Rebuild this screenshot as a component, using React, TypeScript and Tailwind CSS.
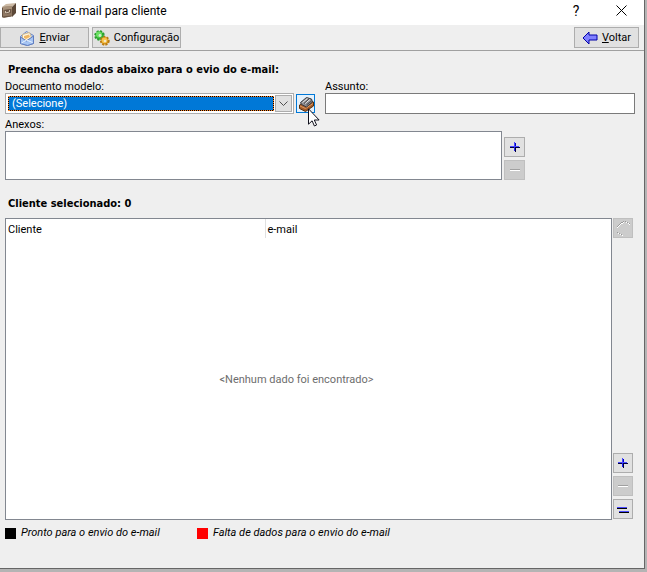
import { useState, type ReactNode } from "react";

function SideButton({ label, disabled, wide, children }: { label: string; disabled?: boolean; wide?: boolean; children: ReactNode }) {
  return (
    <button
      type="button"
      aria-label={label}
      disabled={disabled}
      className={
        (wide ? "w-[21px]" : "w-5") +
        " flex h-5 items-center justify-center border border-[#adadad] bg-[#e1e1e1] disabled:border-[#bfbfbf] disabled:bg-[#cccccc]"
      }
    >
      {children}
    </button>
  );
}

function PlusIcon() {
  return (
    <svg width="12" height="12" viewBox="0 0 12 12" shapeRendering="crispEdges">
      <path d="M6 2h1v9H6zM1 6h10v1H1z" fill="#00003c" />
      <path d="M5 1h1v9H5zM1 5h9v1H1z" fill="#4a4aff" />
      <path d="M6 2h1v3H6z" fill="#0000c8" />
      <path d="M6 5h4v1H6z" fill="#4a4aff" />
      <path d="M5 6h1v4H5z" fill="#2020f0" />
    </svg>
  );
}

function MinusIcon() {
  return (
    <svg width="12" height="12" viewBox="0 0 12 12" shapeRendering="crispEdges">
      <path d="M1 5h10v1H1z" fill="#a0a0a0" />
      <path d="M1 6h10v1H1z" fill="#fff" />
    </svg>
  );
}

function EqualsIcon() {
  return (
    <svg width="12" height="12" viewBox="0 0 12 12" shapeRendering="crispEdges">
      <path d="M0 4h10v1H0zM2 8h10v1H2z" fill="#4a4aff" />
      <path d="M0 5h10v1H0zM2 9h10v1H2z" fill="#000" />
    </svg>
  );
}

function LinkIcon() {
  return (
    <svg width="16" height="16" viewBox="0 0 16 16" shapeRendering="crispEdges">
      <path
        d="M2 6h1v1H2zM3 5h1v1H3zM4 4h1v1H4zM5 3h1v1H5zM6 2h2v1H6zM8 1h1v1H8zM10 1h1v1h-1zM12 2h1v1h-1zM14 3h1v1h-1zM2 12h1v1H2zM4 13h1v1H4zM6 14h1v1H6z"
        fill="#999"
      />
      <path
        d="M2 7h1v1H2zM3 6h1v1H3zM4 5h1v1H4zM5 4h1v1H5zM6 3h2v1H6zM8 2h1v1H8zM11 2h1v1h-1zM13 3h1v1h-1zM14 4h1v1h-1zM3 13h1v1H3zM5 14h1v1H5zM7 15h1v1H7z"
        fill="#fff"
      />
    </svg>
  );
}

function BoxIcon() {
  return (
    <svg width="16" height="17" viewBox="0 0 16 17">
      <path d="M1 5l4-3 10-1-4 4z" fill="#cdbba6" />
      <path d="M1 5l10-1 1 10-9 2-2-1z" fill="#8f7863" />
      <path d="M11 5l4-4v10l-4 4z" fill="#5c4838" />
      <path d="M1 5l10-1v3L1 8z" fill="#a8927b" />
      <path d="M3 8l7-1v4l-6 1z" fill="#6b5646" />
      <path d="M4.500 9v2l4-1V8" fill="none" stroke="#cfc0ae" />
      <path d="M1.500 6v9l9-1" fill="none" stroke="#655141" />
    </svg>
  );
}

function MailIcon() {
  return (
    <svg width="16" height="16" viewBox="0 0 16 16">
      <path d="M1.500 6.500l6-5 7 4v8l-6 2-7-2z" fill="#b9d0f4" stroke="#6b86c4" />
      <path d="M3.500 4.500l7-2 2 5-5 3-4-2z" fill="#fff7e2" stroke="#d2b98c" />
      <path d="M5 6l5-1.500 1 2.500-4 2-2-1z" fill="#efb765" />
      <path d="M1.500 7l6 4 7-5v7.500l-6 2-7-2z" fill="#a5c4f3" stroke="#5f7cbf" />
      <path d="M2.500 13l5-3 6 2.500" fill="none" stroke="#e9f3ff" />
    </svg>
  );
}

function GearsIcon() {
  return (
    <svg width="16" height="16" viewBox="0 0 16 16">
      <circle cx="5.500" cy="5.500" r="4.200" fill="#35b838" stroke="#2a9c30" strokeWidth="2.200" strokeDasharray="2 1.300" />
      <circle cx="5" cy="4.500" r="3" fill="#6be062" />
      <circle cx="6" cy="5.500" r="1.400" fill="#d5ecd2" />
      <circle cx="10.800" cy="10.800" r="3.800" fill="#e3a022" stroke="#b97a12" strokeWidth="2.200" strokeDasharray="2 1.200" />
      <circle cx="10.500" cy="10.300" r="2.800" fill="#f6c34a" />
      <circle cx="11" cy="11" r="1.300" fill="#f2e6cc" />
    </svg>
  );
}

function BackIcon() {
  return (
    <svg width="16" height="14" viewBox="0 0 16 14">
      <path d="M1 7l6-6v3h8v5H7v4z" fill="#8080ff" stroke="#0000a8" />
    </svg>
  );
}

function StapleIcon() {
  return (
    <svg width="16" height="16" viewBox="0 0 16 16">
      <path d="M1.500 9l8-5 6 2v4l-8 5.500-6-3z" fill="#a45a28" stroke="#54300f" />
      <path d="M2 10l5.500 2.500L15 7.500" fill="none" stroke="#dd9a60" />
      <path d="M2.500 6.500l6-5 5 1.500 1 3-6 5-5-2.500z" fill="#8c8c90" stroke="#3a3a3e" />
      <path d="M4.500 6.500l5-4M7 7.500l5-4" stroke="#ececec" />
      <path d="M6 7.500l5-4.500M8.500 9l5-4" stroke="#47474b" />
    </svg>
  );
}

function TitleBar() {
  return (
    <header className="flex h-[25px] items-center bg-white pl-px font-[Roboto,sans-serif] text-xs text-black">
      <div className="flex w-5 shrink-0 pb-1">
        <BoxIcon />
      </div>
      <h1 className="flex-1 pb-1">Envio de e-mail para cliente</h1>
      <button type="button" aria-label="Ajuda" className="w-11 pb-1 text-center text-sm leading-5">?</button>
      <button type="button" aria-label="Fechar" className="flex w-[46px] justify-center pb-1">
        <svg width="11" height="11" viewBox="0 0 11 11">
          <path d="M.5 .5l10 10M10.500 .5l-10 10" stroke="#000" fill="none" />
        </svg>
      </button>
    </header>
  );
}

const toolButton = "flex h-[21px] items-center justify-center gap-1 border border-[#adadad] bg-[#e1e1e1]";
const heading = "pl-[3px] font-['DejaVu_Sans_Condensed','DejaVu_Sans',sans-serif] font-bold";

export default function App() {
  const [model, setModel] = useState("");
  return (
    <div className="min-h-screen bg-[#b4b4b4] pr-0.5 pb-[3px] font-[Roboto,sans-serif] text-[11px] leading-[14px] text-black">
      <div className="border-r border-b border-[#666666] bg-[#efefef] pb-7">
        <TitleBar />
        <div className="flex items-center gap-[3px] border-b border-[#a0a0a0] pt-0.5 pr-[5px] pb-0.5">
          <button type="button" className={toolButton + " w-[89px]"}>
            <MailIcon />
            <span><u>E</u>nviar</span>
          </button>
          <button type="button" className={toolButton + " w-[89px]"}>
            <GearsIcon />
            Configuração
          </button>
          <button type="button" className={toolButton + " ml-auto w-[65px]"}>
            <BackIcon />
            <span><u>V</u>oltar</span>
          </button>
        </div>

        <main className="pt-3 pl-[5px]">
          <h2 className={heading}>Preencha os dados abaixo para o evio do e-mail:</h2>
          <div className="flex pt-[3px] pr-[9px]">
            <div className="w-[289px]">
              <label htmlFor="modelo" className="block h-[13px]">Documento modelo:</label>
              <div className="flex h-[21px] items-center border border-[#adadad] bg-white pr-px pl-0.5">
                <div className="flex min-w-0 flex-1 bg-black">
                  <select
                    id="modelo"
                    value={model}
                    onChange={(e) => setModel(e.target.value)}
                    className="h-[15px] w-full appearance-none border border-dotted border-[#ff8728] bg-[#0078d7] bg-clip-padding pl-[3px] leading-[13px] text-white outline-none"
                  >
                    <option value="">(Selecione)</option>
                  </select>
                </div>
                <span className="ml-px flex h-[17px] w-[17px] items-center justify-center border border-[#adadad] bg-[#e1e1e1]">
                  <svg width="9" height="6" viewBox="0 0 9 6">
                    <path d="M.5 .5l4 4 4-4" fill="none" stroke="#505050" />
                  </svg>
                </span>
              </div>
            </div>
            <div className="relative ml-0.5 self-end pb-px">
              <button type="button" aria-label="Editar modelo" className="flex h-[19px] w-[19px] items-center justify-center border border-[#0078d7] bg-[#e5f1fb]">
                <StapleIcon />
              </button>
              <svg className="absolute top-3.5 left-3" width="12" height="19" viewBox="0 0 12 19">
                <path d="M.5 .8v15.400l3.600-3.400 2.300 5.200 2.200-1-2.300-5h4.800z" fill="#fff" stroke="#10101c" />
              </svg>
            </div>
            <div className="ml-2.5 flex-1">
              <label htmlFor="assunto" className="block h-[13px]">Assunto:</label>
              <input id="assunto" type="text" className="block h-[21px] w-full border border-[#7a7a7a] bg-white px-1 outline-none" />
            </div>
          </div>

          <label htmlFor="anexos" className="block h-[17px] pt-1">Anexos:</label>
          <div className="flex items-end gap-0.5 pr-[119px]">
            <textarea id="anexos" className="block h-[49px] flex-1 resize-none border border-[#828790] bg-white px-1 outline-none" />
            <div className="flex flex-col gap-[3px]">
              <SideButton label="Adicionar anexo" wide><PlusIcon /></SideButton>
              <SideButton label="Remover anexo" wide disabled><MinusIcon /></SideButton>
            </div>
          </div>

          <h2 className={heading + " pt-[17px]"}>Cliente selecionado: 0</h2>
          <div className="flex gap-px pt-[7px] pr-[11px]">
            <div className="h-[302px] flex-1 border border-[#828790] bg-white">
              <table className="h-full w-full border-collapse text-left">
                <thead>
                  <tr className="h-[19px]">
                    <th className="w-[259px] border-r border-[#e0e0e0] pt-0.5 pl-0.5 font-normal">Cliente</th>
                    <th className="pt-0.5 pl-0.5 font-normal">e-mail</th>
                  </tr>
                </thead>
                <tbody>
                  <tr>
                    <td colSpan={2} className="pt-0.5 pr-6 text-center text-[#6d6d6d]">&lt;Nenhum dado foi encontrado&gt;</td>
                  </tr>
                </tbody>
              </table>
            </div>
            <div className="flex flex-col gap-[3px] pb-px">
              <SideButton label="Vincular" disabled><LinkIcon /></SideButton>
              <div className="flex-1" />
              <SideButton label="Adicionar cliente"><PlusIcon /></SideButton>
              <SideButton label="Remover cliente" disabled><MinusIcon /></SideButton>
              <SideButton label="Selecionar todos"><EqualsIcon /></SideButton>
            </div>
          </div>

          <footer className="flex pt-1.5 italic">
            <div className="flex w-48 items-center gap-[5px]">
              <span className="h-[11px] w-[11px] bg-black" />
              Pronto para o envio do e-mail
            </div>
            <div className="flex items-center gap-[5px]">
              <span className="h-[11px] w-[11px] bg-[#ff0000]" />
              Falta de dados para o envio do e-mail
            </div>
          </footer>
        </main>
      </div>
    </div>
  );
}
